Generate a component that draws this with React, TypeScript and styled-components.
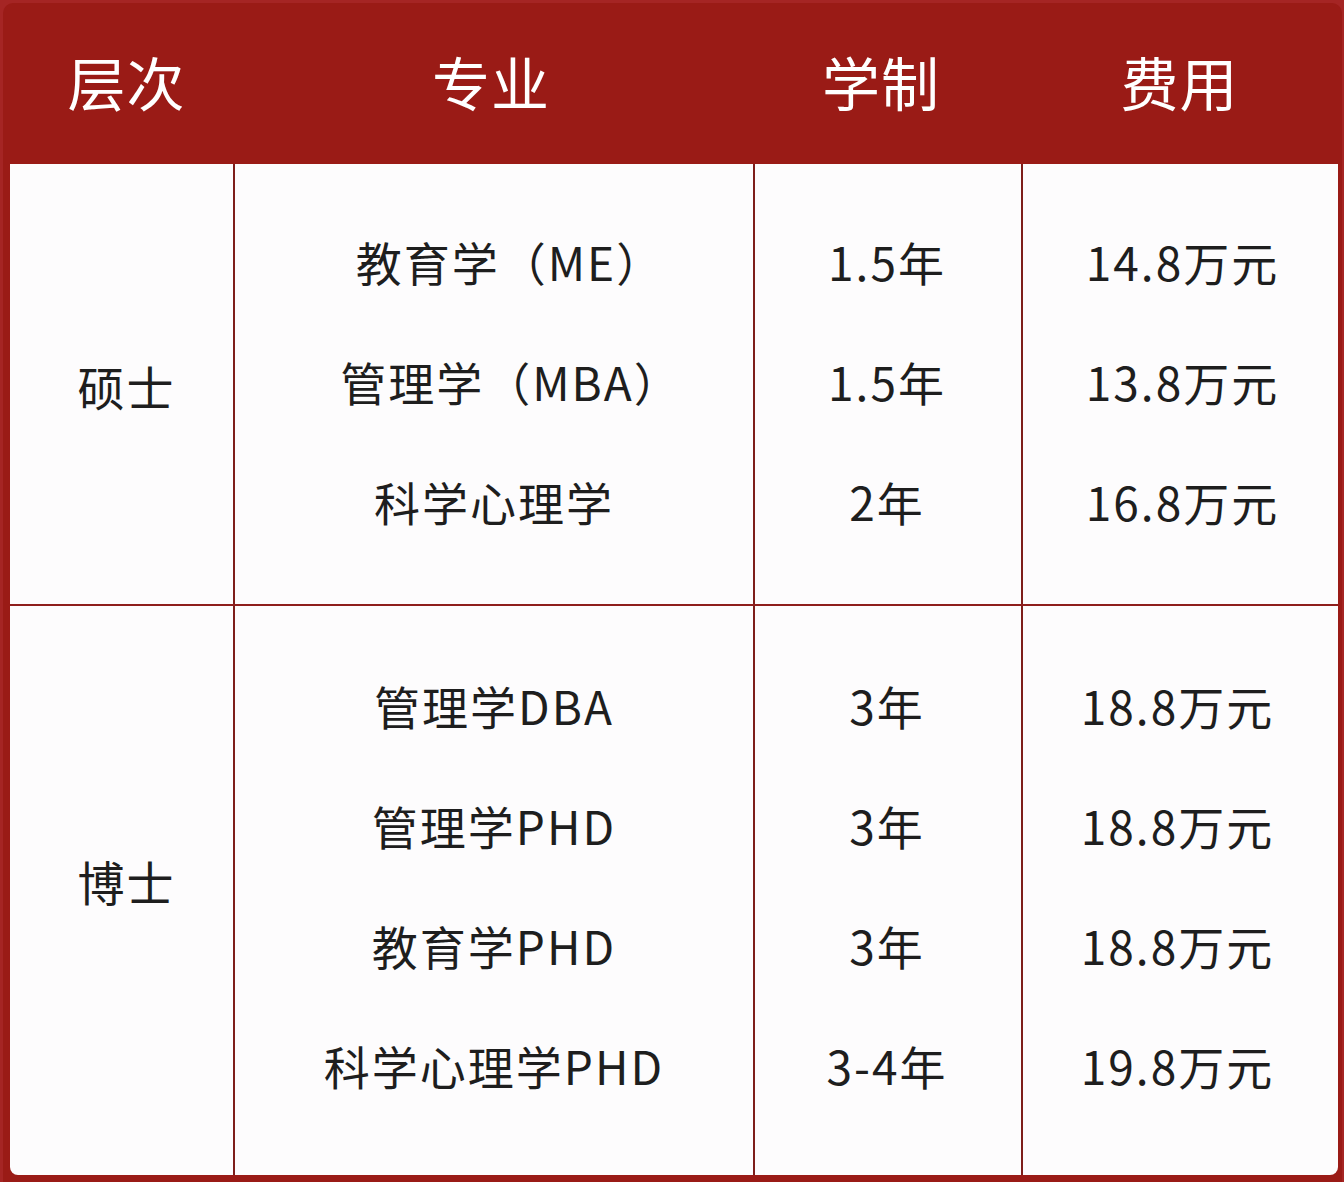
import styled, { createGlobalStyle } from "styled-components";

const GlobalStyle = createGlobalStyle`
  html, body {
    margin: 0;
    padding: 0;
    background: #a52524;
  }
  body {
    font-family: "Noto Sans CJK SC", "Noto Sans", sans-serif;
  }
`;

const Page = styled.div`
  width: 1344px;
  height: 1182px;
  box-sizing: border-box;
  padding: 3px 2px 0 3px;
  background: #a52524;
`;

const Card = styled.div`
  height: 100%;
  box-sizing: border-box;
  background: #9a1b16;
  border-radius: 10px 10px 0 0;
  padding: 0 4px 7px 7px;
  display: flex;
  flex-direction: column;
`;

const COLS = "223px 520px 268px 1fr";

const Header = styled.div`
  height: 161px;
  display: grid;
  grid-template-columns: ${COLS};
  align-items: center;
`;

const HeadCell = styled.div<{ $shift?: number }>`
  color: #fff;
  font-size: 58px;
  font-weight: 400;
  letter-spacing: 1px;
  text-align: center;
  margin-left: ${(p) => p.$shift ?? 0}px;
  padding-bottom: 6px;
`;

const Body = styled.div`
  flex: 1;
  background: #fdfcfd;
  border-radius: 0 0 8px 8px;
  display: flex;
  flex-direction: column;
  overflow: hidden;
`;

const Group = styled.div<{ $h: number; $last?: boolean }>`
  height: ${(p) => p.$h}px;
  display: grid;
  grid-template-columns: ${COLS};
  border-bottom: ${(p) => (p.$last ? "none" : "2px solid #8e1e1c")};
`;

const Col = styled.div<{ $first?: boolean; $shift?: number; $lift?: number }>`
  display: flex;
  flex-direction: column;
  justify-content: center;
  align-items: center;
  border-left: ${(p) => (p.$first ? "none" : "2px solid #7e1e1b")};
  padding-left: ${(p) => Math.max(0, p.$shift ?? 0)}px;
  padding-right: ${(p) => Math.max(0, -(p.$shift ?? 0))}px;
  padding-bottom: ${(p) => Math.max(0, p.$lift ?? 0)}px;
  padding-top: ${(p) => Math.max(0, -(p.$lift ?? 0))}px;
`;

const Level = styled.div`
  font-size: 47px;
  letter-spacing: 2px;
  color: #1e1e1e;
  padding-left: 10px;
`;

const Item = styled.div<{ $nudge?: number }>`
  height: 120px;
  display: flex;
  align-items: center;
  justify-content: center;
  font-size: 46px;
  letter-spacing: 2px;
  color: #1e1e1e;
  white-space: nowrap;
  padding-left: ${(p) => p.$nudge ?? 0}px;
`;

type Row = { major: string; years: string; fee: string; nudge?: number };

const master: Row[] = [
  { major: "教育学（ME）", years: "1.5年", fee: "14.8万元", nudge: 32 },
  { major: "管理学（MBA）", years: "1.5年", fee: "13.8万元", nudge: 34 },
  { major: "科学心理学", years: "2年", fee: "16.8万元" },
];

const doctor: Row[] = [
  { major: "管理学DBA", years: "3年", fee: "18.8万元" },
  { major: "管理学PHD", years: "3年", fee: "18.8万元" },
  { major: "教育学PHD", years: "3年", fee: "18.8万元" },
  { major: "科学心理学PHD", years: "3-4年", fee: "19.8万元" },
];

function Section({
  level,
  rows,
  height,
  lift,
  levelLift,
  feeShift,
  last,
}: {
  level: string;
  rows: Row[];
  height: number;
  lift: number;
  levelLift: number;
  feeShift: number;
  last?: boolean;
}) {
  return (
    <Group $h={height} $last={last}>
      <Col $first $lift={levelLift}>
        <Level>{level}</Level>
      </Col>
      <Col $lift={lift}>
        {rows.map((r) => (
          <Item key={r.major} $nudge={r.nudge}>
            {r.major}
          </Item>
        ))}
      </Col>
      <Col $shift={-2} $lift={lift}>
        {rows.map((r, i) => (
          <Item key={i}>{r.years}</Item>
        ))}
      </Col>
      <Col $shift={feeShift} $lift={lift}>
        {rows.map((r, i) => (
          <Item key={i}>{r.fee}</Item>
        ))}
      </Col>
    </Group>
  );
}

export default function App() {
  return (
    <>
      <GlobalStyle />
      <Page>
        <Card>
          <Header>
            <HeadCell $shift={10}>层次</HeadCell>
            <HeadCell $shift={-4}>专业</HeadCell>
            <HeadCell $shift={-12}>学制</HeadCell>
            <HeadCell>费用</HeadCell>
          </Header>
          <Body>
            <Section
              level="硕士"
              rows={master}
              height={440}
              lift={6}
              levelLift={-2}
              feeShift={4}
            />
            <Section
              level="博士"
              rows={doctor}
              height={569}
              lift={12}
              levelLift={20}
              feeShift={-6}
              last
            />
          </Body>
        </Card>
      </Page>
    </>
  );
}
